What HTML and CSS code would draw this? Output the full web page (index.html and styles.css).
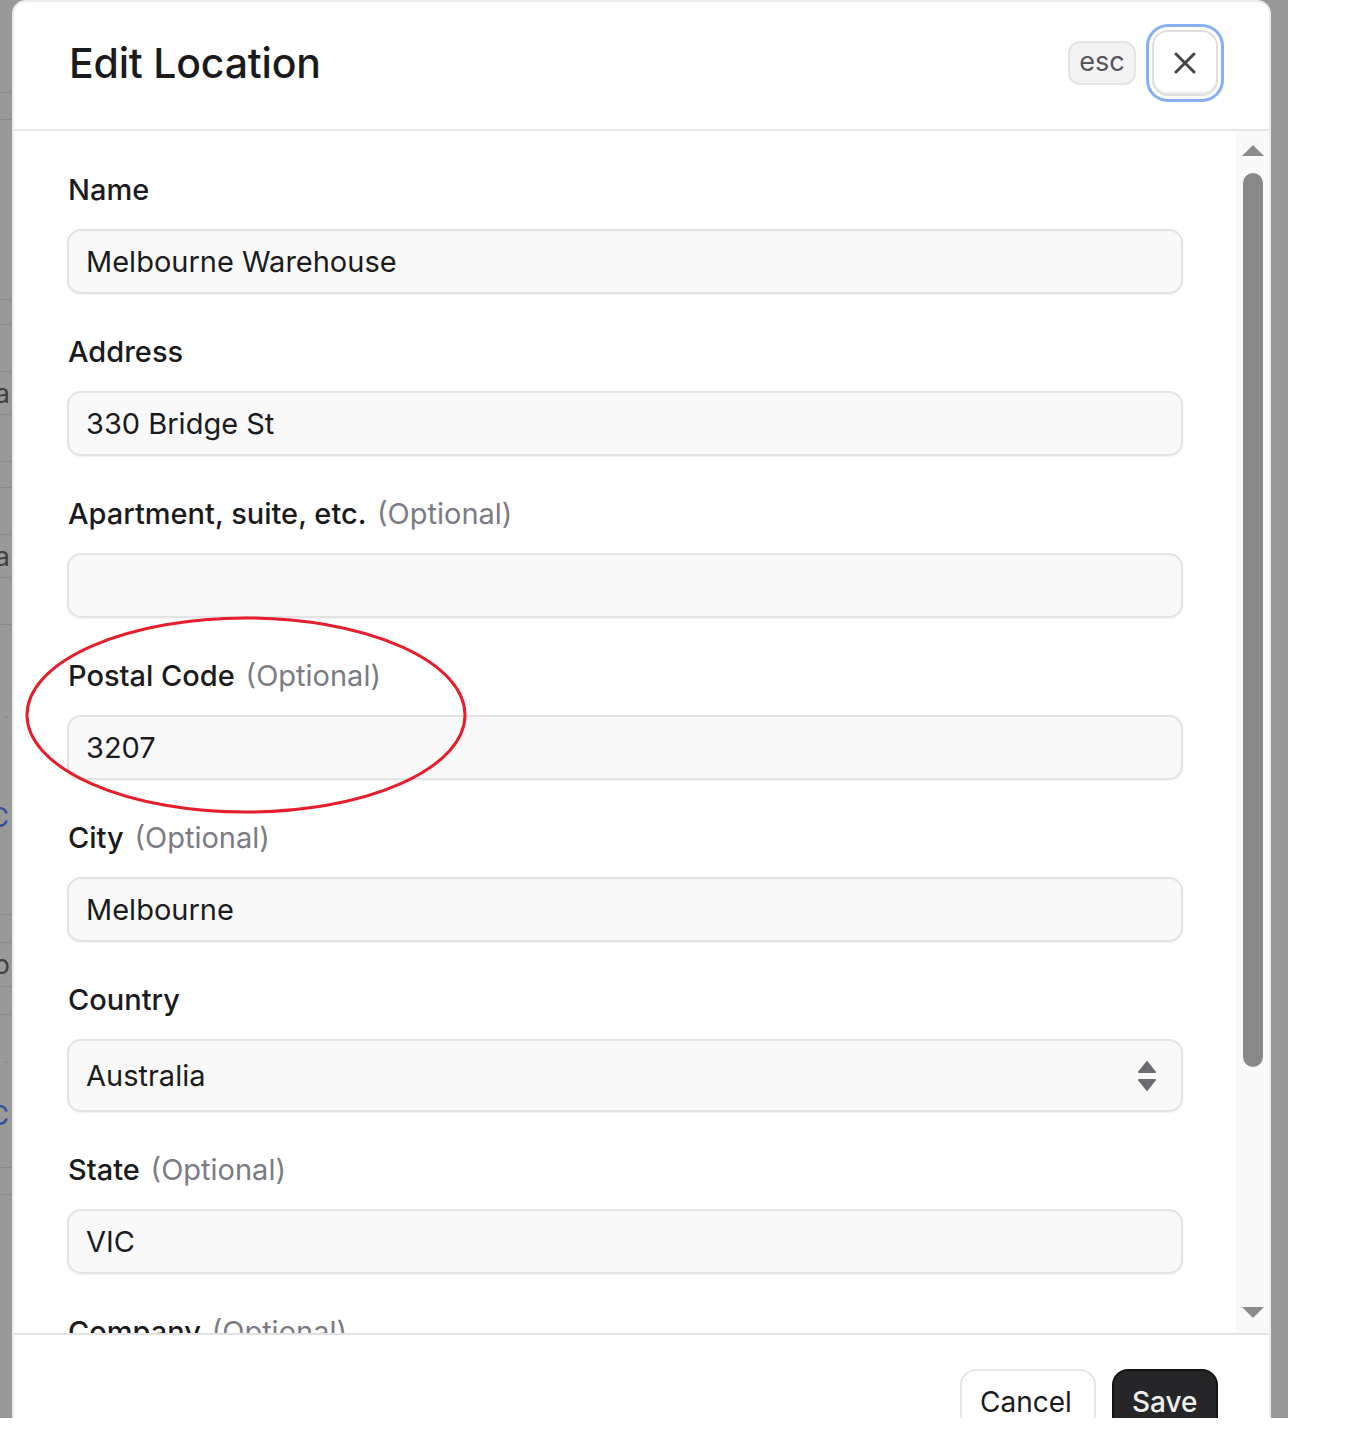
FILE: index.html
```html
<!DOCTYPE html>
<html lang="en">
<head>
<meta charset="utf-8">
<title>Edit Location</title>
<link rel="stylesheet" href="styles.css">
</head>
<body>
<div class="viewport">
  <div class="bgpage">
    <div class="bgrow"></div>
    <div class="bgrow"></div>
    <div class="bgrow"></div>
    <div class="bgrow"></div>
    <div class="bgrow"></div>
    <div class="bgrow"><span class="bgtext">Da</span></div>
    <div class="bgrow"></div>
    <div class="bgrow"></div>
    <div class="bgrow"></div>
    <div class="bgrow"><span class="bgtext">Da</span></div>
    <div class="bgrow"></div>
    <div class="bgrow bgrow-split"><span class="bgdot">.</span><span class="bgtext bglink">C</span></div>
    <div class="bgrow"></div>
    <div class="bgrow"><span class="bgtext">o</span></div>
    <div class="bgrow"></div>
    <div class="bgrow bgrow-split"><span class="bgdot">.</span><span class="bgtext bglink">C</span></div>
    <div class="bgrow"></div>
  </div>

  <div class="modal">
    <header class="modal-header">
      <h1 class="modal-title">Edit Location</h1>
      <div class="header-actions">
        <span class="kbd">esc</span>
        <button class="close-btn" type="button" aria-label="Close">
          <svg width="22" height="22" viewBox="0 0 22 22" aria-hidden="true">
            <path d="M2 2 L20 20 M20 2 L2 20" stroke="#45454a" stroke-width="3" stroke-linecap="round" fill="none"/>
          </svg>
        </button>
      </div>
    </header>

    <div class="modal-body">
      <div class="form">
        <div class="form-group">
          <div class="label">Name</div>
          <div class="field">Melbourne Warehouse</div>
        </div>
        <div class="form-group">
          <div class="label">Address</div>
          <div class="field">330 Bridge St</div>
        </div>
        <div class="form-group">
          <div class="label">Apartment, suite, etc. <span class="optional">(Optional)</span></div>
          <div class="field"></div>
        </div>
        <div class="form-group">
          <div class="label">Postal Code <span class="optional">(Optional)</span></div>
          <div class="field">3207</div>
        </div>
        <div class="form-group">
          <div class="label">City <span class="optional">(Optional)</span></div>
          <div class="field">Melbourne</div>
        </div>
        <div class="form-group">
          <div class="label">Country</div>
          <div class="field field-select">
            <span>Australia</span>
            <svg class="select-arrows" width="20" height="32" viewBox="0 0 20 32" aria-hidden="true">
              <path d="M10 2 L18 12 L2 12 Z" fill="#6c6c75" stroke="#6c6c75" stroke-width="2" stroke-linejoin="round"/>
              <path d="M2 20 L18 20 L10 30 Z" fill="#6c6c75" stroke="#6c6c75" stroke-width="2" stroke-linejoin="round"/>
            </svg>
          </div>
        </div>
        <div class="form-group">
          <div class="label">State <span class="optional">(Optional)</span></div>
          <div class="field">VIC</div>
        </div>
        <div class="form-group">
          <div class="label">Company <span class="optional">(Optional)</span></div>
          <div class="field"></div>
        </div>
      </div>
      <div class="scrollbar">
        <span class="sb-arrow sb-up"></span>
        <span class="sb-thumb"></span>
        <span class="sb-arrow sb-down"></span>
      </div>
    </div>

    <footer class="modal-footer">
      <button class="btn btn-secondary" type="button">Cancel</button>
      <button class="btn btn-primary" type="button">Save</button>
    </footer>
  </div>

  <svg class="annotation" width="460" height="210" viewBox="0 0 460 210" aria-hidden="true">
    <ellipse cx="230" cy="105" rx="219" ry="97" fill="none" stroke="#e41e2b" stroke-width="3"/>
  </svg>
</div>
</body>
</html>
```

FILE: styles.css
```css
* { box-sizing: border-box; }

html, body {
  margin: 0;
  padding: 0;
  background: #ffffff;
}

body {
  font-family: Inter, "Noto Sans", "Liberation Sans", sans-serif;
  color: #1b1b1d;
}

.viewport {
  position: relative;
  width: 1288px;
  height: 1418px;
  overflow: hidden;
  background: #999999;
}

/* dimmed page behind the dialog */
.bgpage {
  display: grid;
  width: 12px;
  grid-template-rows: 93px 27px 180px 25px 47px 43px 47px 26px 47px 43px 47px 290px 28px 44px 28px 153px 27px;
}

.bgrow {
  border-bottom: 1px solid #8a8a8a;
  display: flex;
  align-items: center;
  justify-content: flex-end;
  overflow: hidden;
}

.bgrow-split {
  flex-direction: column;
  justify-content: space-evenly;
  align-items: flex-end;
}

.bgtext {
  font-size: 27px;
  line-height: 1;
  color: #3f3f3f;
  white-space: nowrap;
  margin-right: 2px;
}

.bglink {
  color: #2d4f9a;
  margin-right: 3px;
}

.bgdot {
  font-size: 12px;
  color: #777;
  line-height: 1;
  margin-right: 4px;
}

/* dialog */
.modal {
  position: absolute;
  left: 12px;
  top: 0;
  width: 1259px;
  height: 1480px;
  background: #ffffff;
  border: 2px solid #ececec;
  border-radius: 14px;
  display: flex;
  flex-direction: column;
  overflow: hidden;
}

.modal-header {
  height: 129px;
  flex: none;
  display: flex;
  align-items: center;
  justify-content: space-between;
  padding: 0 51px 6px 55px;
  border-bottom: 2px solid #e6e6e6;
}

.modal-title {
  margin: 0;
  font-size: 41px;
  font-weight: 500;
  letter-spacing: -0.2px;
  color: #1b1b1d;
}

.header-actions {
  display: flex;
  align-items: center;
  gap: 16px;
  margin-top: 0;
}

.kbd {
  display: inline-flex;
  align-items: center;
  justify-content: center;
  width: 68px;
  height: 44px;
  border: 2px solid #e3e3e3;
  border-radius: 12px;
  background: #f3f3f4;
  font-size: 27px;
  color: #55555c;
  padding-bottom: 2px;
}

.close-btn {
  width: 66px;
  height: 66px;
  border: 2px solid #dedede;
  border-radius: 16px;
  background: #ffffff;
  display: flex;
  align-items: center;
  justify-content: center;
  padding: 0;
  box-shadow: 0 0 0 3px #ffffff, 0 0 0 6px #86b0f5, inset 0 -2px 0 #ececec;
}

.modal-body {
  height: 1202px;
  flex: none;
  display: flex;
  overflow: hidden;
}

.form {
  flex: 1;
  padding: 42px 53px 0 53px;
  display: flex;
  flex-direction: column;
  gap: 41px;
}

.form-group {
  display: flex;
  flex-direction: column;
  gap: 22px;
}

.label {
  font-size: 29px;
  line-height: 34px;
  font-weight: 500;
  color: #1b1b1d;
  padding-left: 1px;
}

.optional {
  font-weight: 400;
  color: #7b7b84;
  margin-left: 3px;
}

.field {
  height: 65px;
  border: 2px solid #e3e3e3;
  border-radius: 14px;
  background: #f9f9f9;
  box-shadow: 0 1px 2px rgba(0, 0, 0, 0.06);
  font-size: 29px;
  color: #1b1b1d;
  display: flex;
  align-items: center;
  padding: 0 17px;
}

.field-select {
  height: 73px;
  justify-content: space-between;
  padding-right: 24px;
}

.select-arrows {
  display: block;
}

/* scrollbar column */
.scrollbar {
  width: 33px;
  flex: none;
  background: #f9f9f9;
  display: flex;
  flex-direction: column;
  align-items: center;
  padding: 14px 0 15px 1px;
}

.sb-arrow {
  width: 0;
  height: 0;
  border-left: 11px solid transparent;
  border-right: 11px solid transparent;
}

.sb-up {
  border-bottom: 11px solid #8c8c8c;
}

.sb-down {
  border-top: 11px solid #8c8c8c;
  margin-top: auto;
}

.sb-thumb {
  width: 20px;
  height: 894px;
  margin-top: 17px;
  border-radius: 10px;
  background: #888888;
}

/* footer */
.modal-footer {
  flex: none;
  border-top: 2px solid #e2e2e2;
  display: flex;
  justify-content: flex-end;
  gap: 16px;
  padding: 34px 51px 30px 0;
}

.btn {
  height: 66px;
  border-radius: 16px;
  font-family: Inter, "Noto Sans", "Liberation Sans", sans-serif;
  font-size: 28px;
  padding: 0 18px;
  display: flex;
  align-items: center;
}

.btn-secondary {
  width: 136px;
  background: #ffffff;
  border: 2px solid #e6e6e6;
  color: #1b1b1d;
}

.btn-primary {
  width: 106px;
  background: #262628;
  border: 2px solid #141414;
  color: #eeeeee;
  font-weight: 500;
}

/* red hand-drawn annotation */
.annotation {
  position: absolute;
  left: 16px;
  top: 610px;
  pointer-events: none;
}
```
